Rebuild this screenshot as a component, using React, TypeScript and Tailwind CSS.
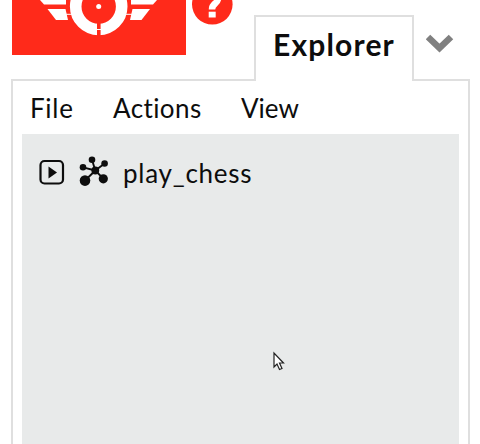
const font = "font-[Lato,'Open_Sans',sans-serif]";

function Logo() {
  return (
    <svg className="block h-[55px] w-[174px] bg-[#ff2a1a]" viewBox="12 0 174 55">
      <g fill="#fff">
        <path d="M40 0H66V4.500H44Z" />
        <path d="M157 0H131V4.500H153Z" />
        <path d="M47.500 9H65.500L68 20H56Z" />
        <path d="M150 9H132.500L130 20H141.500Z" />
      </g>
      <circle cx="98.700" cy="6.500" r="23" fill="none" stroke="#fff" strokeWidth="11.600" />
      <path d="M66 14.300H72M125 14.300H132" stroke="#fff" strokeWidth="1" />
      <path d="M98.800 22V37" stroke="#ff2a1a" strokeWidth="3.600" />
      <path d="M97 29.500H101" stroke="#fff" strokeWidth="1" />
      <circle cx="98.700" cy="6.500" r="2.500" fill="#fff" />
    </svg>
  );
}

function Help() {
  return (
    <svg className="ml-1.5 block h-[26px] w-[41px]" viewBox="192 0 41 26">
      <circle cx="212.300" cy="4.300" r="20.300" fill="#ff2a1a" />
      <path d="M206 -2C207 -8 218.500 -8 218 -1C217.500 4 212 3 212 9.500" fill="none" stroke="#fff" strokeWidth="6.500" />
      <path d="M208.700 11.700H215.700V17.500H208.700Z" fill="#fff" />
    </svg>
  );
}

function Graph() {
  return (
    <svg className="ml-[14px] block h-[32px] w-[30px]" viewBox="79 156 30 32" fill="#0d0d0d">
      <path d="M95.300 170.500L92 159.700M95.300 170.500L104.600 163.500M95.300 170.500L83 167.300M95.300 170.500L85 180.500M95.300 170.500L103.300 178.700" stroke="#0d0d0d" strokeWidth="1.900" />
      <circle cx="95.300" cy="170.500" r="3.900" />
      <circle cx="92" cy="159.700" r="3.300" />
      <circle cx="104.600" cy="163.500" r="3.300" />
      <circle cx="83" cy="167.300" r="3.300" />
      <circle cx="85" cy="180.600" r="5.300" />
      <circle cx="103.300" cy="178.800" r="4.600" />
    </svg>
  );
}

export default function App() {
  return (
    <div className={`relative h-[444px] w-[480px] overflow-hidden bg-white text-[#0d0d0d] [font-variant-ligatures:none] ${font}`}>
      <header className="flex h-[79px] items-start pl-3">
        <Logo />
        <Help />
        <div className="relative z-10 mt-[15px] ml-[21px] flex h-[66px] w-[160px] justify-center border-2 border-b-0 border-[#dfdfdf] bg-white pt-[9px]">
          <h1 className="text-[30px] leading-[36px] font-bold tracking-[1.15px] whitespace-nowrap">Explorer</h1>
        </div>
        <svg className="mt-[33px] ml-[12px] h-[21px] w-[28px]" viewBox="426 33 28 21">
          <path d="M428 37L439.500 48L451 37" fill="none" stroke="#808080" strokeWidth="6.500" />
        </svg>
      </header>
      <main className="ml-[11px] h-[380px] w-[459px] border-2 border-[#dfdfdf] px-[9px]">
        <nav className="flex h-[53px] items-center pl-2 text-[26px] leading-[36px] whitespace-nowrap">
          <span className="w-[83px] tracking-[0.7px]">File</span>
          <span className="w-[128px] tracking-[0.4px]">Actions</span>
          <span>View</span>
        </nav>
        <section className="h-[320px] bg-[#e8eaea] pt-[20px] pl-[17px]">
          <div className="flex items-center">
            <svg className="block h-[26px] w-[26px]" viewBox="39 159 26 26">
              <rect x="40.500" y="161" width="22.500" height="22.500" rx="4" fill="none" stroke="#0d0d0d" strokeWidth="2.200" />
              <path d="M48.500 166.500V178.500L57 172.500Z" fill="#0d0d0d" />
            </svg>
            <Graph />
            <span className="mt-0.5 ml-[14px] text-[26px] leading-[34px] tracking-[0.75px] whitespace-nowrap">play_chess</span>
          </div>
        </section>
      </main>
      <svg className="absolute top-[351px] left-[272px] h-[21px] w-[14px]" viewBox="0 0 14 21">
        <path d="M2 2V16L5 13L7.500 18.500L10 17.500L7.500 12H11.500Z" fill="#fff" stroke="#222" strokeWidth="1.200" />
      </svg>
    </div>
  );
}
